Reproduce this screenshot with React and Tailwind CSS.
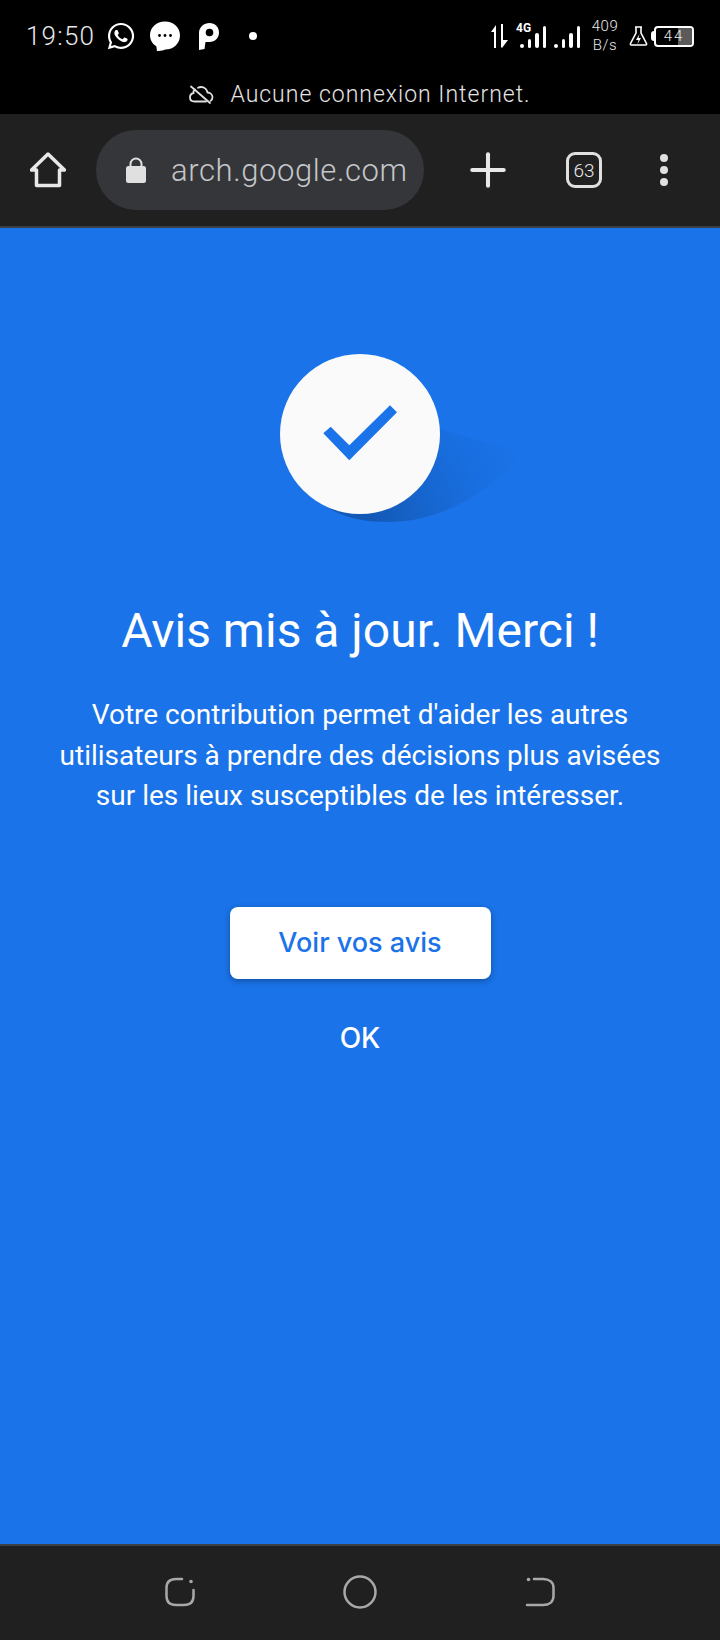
import { FaWhatsapp } from "react-icons/fa";
import { Plus } from "lucide-react";

function SignalBars() {
  return (
    <div className="flex items-end gap-[4px]">
      <span className="w-[3.500px] h-[4px] rounded-full bg-white" />
      <span className="w-[3.500px] h-[9px] rounded-sm bg-white" />
      <span className="w-[3.500px] h-[15px] rounded-sm bg-white" />
      <span className="w-[3.500px] h-[22px] rounded-sm bg-white" />
    </div>
  );
}

function StatusBar() {
  return (
    <div className="bg-black h-[114px] shrink-0 flex flex-col text-white font-['Roboto',sans-serif]">
      {/* ligne du haut */}
      <div className="h-[81px] flex items-start justify-between pl-[26px] pr-[26px] pt-[21px]">
        <div className="flex items-center h-[30px]">
          <span className="w-[72px] text-[26px] leading-[30px] font-light tracking-[1.2px] text-[#e8e8e8]">19:50</span>
          <FaWhatsapp className="w-[30px] h-[30px] ml-[8px]" />
          <svg className="ml-[13px]" width="32" height="32" viewBox="0 0 32 32">
            <path d="M16 1.500C7.500 1.500 1 7.600 1 15.200c0 4.700 2.400 8.600 6.300 11.100L8 31c3.700.2 6.500-.500 8.300-1.400 8.400 0 14.700-6.300 14.700-14.400C31 7.600 24.500 1.500 16 1.500z" fill="white" />
            <circle cx="10.500" cy="15.500" r="1.400" fill="black" />
            <circle cx="16" cy="15.500" r="1.400" fill="black" />
            <circle cx="21.500" cy="15.500" r="1.400" fill="black" />
          </svg>
          <svg className="ml-[18px]" width="20" height="28" viewBox="0 0 20 28">
            <path d="M0 11C0 5 5 1 10.500 1S20 5 20 10.500 16 20 10.500 20H6.500L5.500 27 0 28z" fill="white" />
            <circle cx="10.500" cy="10.500" r="3.800" fill="black" />
          </svg>
          <span className="ml-[30px] w-[8px] h-[8px] rounded-full bg-white" />
        </div>
        <div className="flex items-center h-[30px]">
          <svg width="18" height="24" viewBox="0 0 18 24">
            <path d="M1 8 6 1v23H4V8zM11 0h2v16h5l-6 8-1-1z" fill="white" />
          </svg>
          <div className="relative ml-[12px] h-[26px] pb-[1px] flex items-end">
            <span className="absolute left-[-4px] top-[-1px] text-[12px] leading-[12px] font-bold">4G</span>
            <SignalBars />
          </div>
          <div className="ml-[8px] h-[26px] pb-[1px] flex items-end">
            <SignalBars />
          </div>
          <div className="ml-[11px] w-[28px] flex flex-col items-center text-[15px] leading-[19px] font-light tracking-[0.5px] text-[#e8e8e8]">
            <span>409</span>
            <span>B/s</span>
          </div>
          <svg className="ml-[10px]" width="19" height="20" viewBox="0 0 19 20">
            <path d="M6 1h7M7 1v6L1.500 17.500Q1 19 2.500 19h14q1.500 0 1-1.500L12 7V1" fill="none" stroke="white" strokeWidth="1.600" />
            <path d="M10.500 8 7 14h2.500L8.500 18 12 12H9.500z" fill="white" />
          </svg>
          <span className="ml-[3px] w-[3px] h-[10px] rounded-l-sm bg-white" />
          <div className="relative w-[40px] h-[21px] rounded-[4px] border-2 border-white overflow-hidden flex items-center justify-center">
            <div className="absolute right-0 top-0 bottom-0 w-[14px] bg-[#5a5a5a]" />
            <span className="relative text-[15px] leading-none font-light tracking-[2px] text-[#e8e8e8]">44</span>
          </div>
        </div>
      </div>
      {/* ligne hors connexion */}
      <div className="flex items-center justify-center">
        <svg width="25" height="20" viewBox="0 0 25 20" fill="none" stroke="#e0e0e0" strokeWidth="1.800" strokeLinecap="round">
          <path d="M2 1.500 21 18" />
          <path d="M6 4.500C4 6 4.500 8 4.500 8 2 8.500 1 10.500 1 12.500 1 15 3 16.500 5.500 16.500H17M9 2.800C10 2.200 11 2 12 2c3.500 0 6 2.500 6.500 5.500 3 .2 5 2.500 5 4.800 0 1.500-.7 2.700-1.800 3.500" />
        </svg>
        <span className="ml-[16px] text-[23px] leading-[28px] font-light tracking-[1px] text-[#e4e4e4]">Aucune connexion Internet.</span>
      </div>
    </div>
  );
}

function Toolbar() {
  return (
    <div className="h-[114px] shrink-0 bg-[#202020] border-b-2 border-[#3c4043] flex items-center pl-[30px] text-[#e8e8e8] font-['Roboto',sans-serif]">
      <svg width="36" height="36" viewBox="0 0 36 36" fill="none" stroke="#e8e8e8" strokeWidth="3.500" strokeLinejoin="round">
        <path d="M18 2 1.500 18H6.500V33.500H29.500V18H34.500z" />
      </svg>
      <div className="ml-[30px] w-[328px] h-[80px] rounded-full bg-[#35363a] flex items-center pl-[30px] overflow-hidden">
        <svg width="20" height="26" viewBox="0 0 20 26">
          <path d="M4.500 10V7a5.500 5.500 0 0 1 11 0v3" fill="none" stroke="#e0e0e0" strokeWidth="2" />
          <rect x="0" y="9" width="20" height="17" rx="2.500" fill="#e0e0e0" />
        </svg>
        <span className="ml-[25px] text-[31px] leading-none font-light tracking-[0.6px] text-[#c4c6c9] whitespace-nowrap">arch.google.com</span>
      </div>
      <Plus className="ml-[37px] w-[54px] h-[54px] text-[#e8e8e8]" strokeWidth={1.8} />
      <div className="ml-[51px] w-[36px] h-[36px] rounded-[9px] border-[3px] border-[#e0e0e0] flex items-center justify-center text-[19px] leading-none font-light">
        63
      </div>
      <div className="ml-[58px] flex flex-col gap-[4px]">
        <span className="w-[8px] h-[8px] rounded-full bg-[#e0e0e0]" />
        <span className="w-[8px] h-[8px] rounded-full bg-[#e0e0e0]" />
        <span className="w-[8px] h-[8px] rounded-full bg-[#e0e0e0]" />
      </div>
    </div>
  );
}

function SuccessBadge() {
  return (
    <div className="relative w-[160px] h-[160px]">
      {/* ombre portée */}
      <svg className="absolute left-0 top-0 overflow-visible" width="260" height="175" viewBox="0 0 260 175">
        <defs>
          <radialGradient id="longShadow" cx="80" cy="170" r="180" gradientUnits="userSpaceOnUse">
            <stop offset="0" stopColor="#0b3f86" stopOpacity="0.55" />
            <stop offset="0.4" stopColor="#0b3f86" stopOpacity="0.25" />
            <stop offset="0.7" stopColor="#0b3f86" stopOpacity="0.08" />
            <stop offset="1" stopColor="#0b3f86" stopOpacity="0" />
          </radialGradient>
        </defs>
        <path d="M36 145C60 167 95 170 125 167 170 162 210 135 245 100L160 75z" fill="url(#longShadow)" />
      </svg>
      <div className="absolute inset-0 rounded-full bg-[#fafafa]" />
      <svg className="absolute left-0 top-0" width="160" height="160" viewBox="0 0 160 160">
        <polygon points="43.300,79.300 50.700,72.700 69.300,91.300 110,51.300 117,58.300 69.300,106.300" fill="#1a73e8" />
      </svg>
    </div>
  );
}

function NavBar() {
  return (
    <div className="h-[96px] shrink-0 bg-[#202020] border-t-2 border-[#3c4043] flex items-start pt-[29px] pl-[165px]">
      <svg className="mt-[2px]" width="30" height="30" viewBox="0 0 30 30" fill="none" stroke="#a8a8a8" strokeWidth="2.500" strokeLinecap="round">
        <path d="M17 2H11C5 2 1.500 5 1.500 11V19C1.500 25 5 28 11 28H19C25 28 28.500 25 28.500 19V13" />
        <circle cx="26" cy="4.500" r="1.800" fill="#a8a8a8" stroke="none" />
      </svg>
      <svg className="ml-[148px]" width="34" height="34" viewBox="0 0 34 34" fill="none" stroke="#a8a8a8" strokeWidth="2.500">
        <circle cx="17" cy="17" r="15.500" />
      </svg>
      <svg className="ml-[148px] mt-[2px]" width="30" height="30" viewBox="0 0 30 30" fill="none" stroke="#a8a8a8" strokeWidth="2.500" strokeLinecap="round">
        <path d="M9 2H18C24 2 28.500 5 28.500 11V19C28.500 25 24 28 18 28H2" />
        <circle cx="3.500" cy="2.500" r="1.800" fill="#a8a8a8" stroke="none" />
      </svg>
    </div>
  );
}

export default function App() {
  return (
    <div className="w-[720px] h-[1640px] flex flex-col overflow-hidden">
      <StatusBar />
      <Toolbar />
      <main className="flex-1 bg-[#1a73e8] flex flex-col items-center pt-[126px] text-white font-['Roboto',sans-serif]">
        <SuccessBadge />
        <h1 className="mt-[85px] text-[48px] leading-[64px] font-normal">Avis mis à jour. Merci !</h1>
        <p className="mt-[32px] w-[660px] text-center text-[28px] leading-[40.500px]">
          Votre contribution permet d'aider les autres
          <br />
          utilisateurs à prendre des décisions plus avisées
          <br />
          sur les lieux susceptibles de les intéresser.
        </p>
        <button className="mt-[90px] w-[261px] h-[72px] pt-[2px] rounded-[8px] bg-white text-[#1a73e8] text-[27px] font-medium font-['Inter',sans-serif] shadow-[0_2px_6px_rgba(0,0,0,0.3)]">
          Voir vos avis
        </button>
        <button className="mt-[39px] text-[28px] leading-[40px] font-medium font-['Inter',sans-serif] text-white">OK</button>
      </main>
      <NavBar />
    </div>
  );
}
